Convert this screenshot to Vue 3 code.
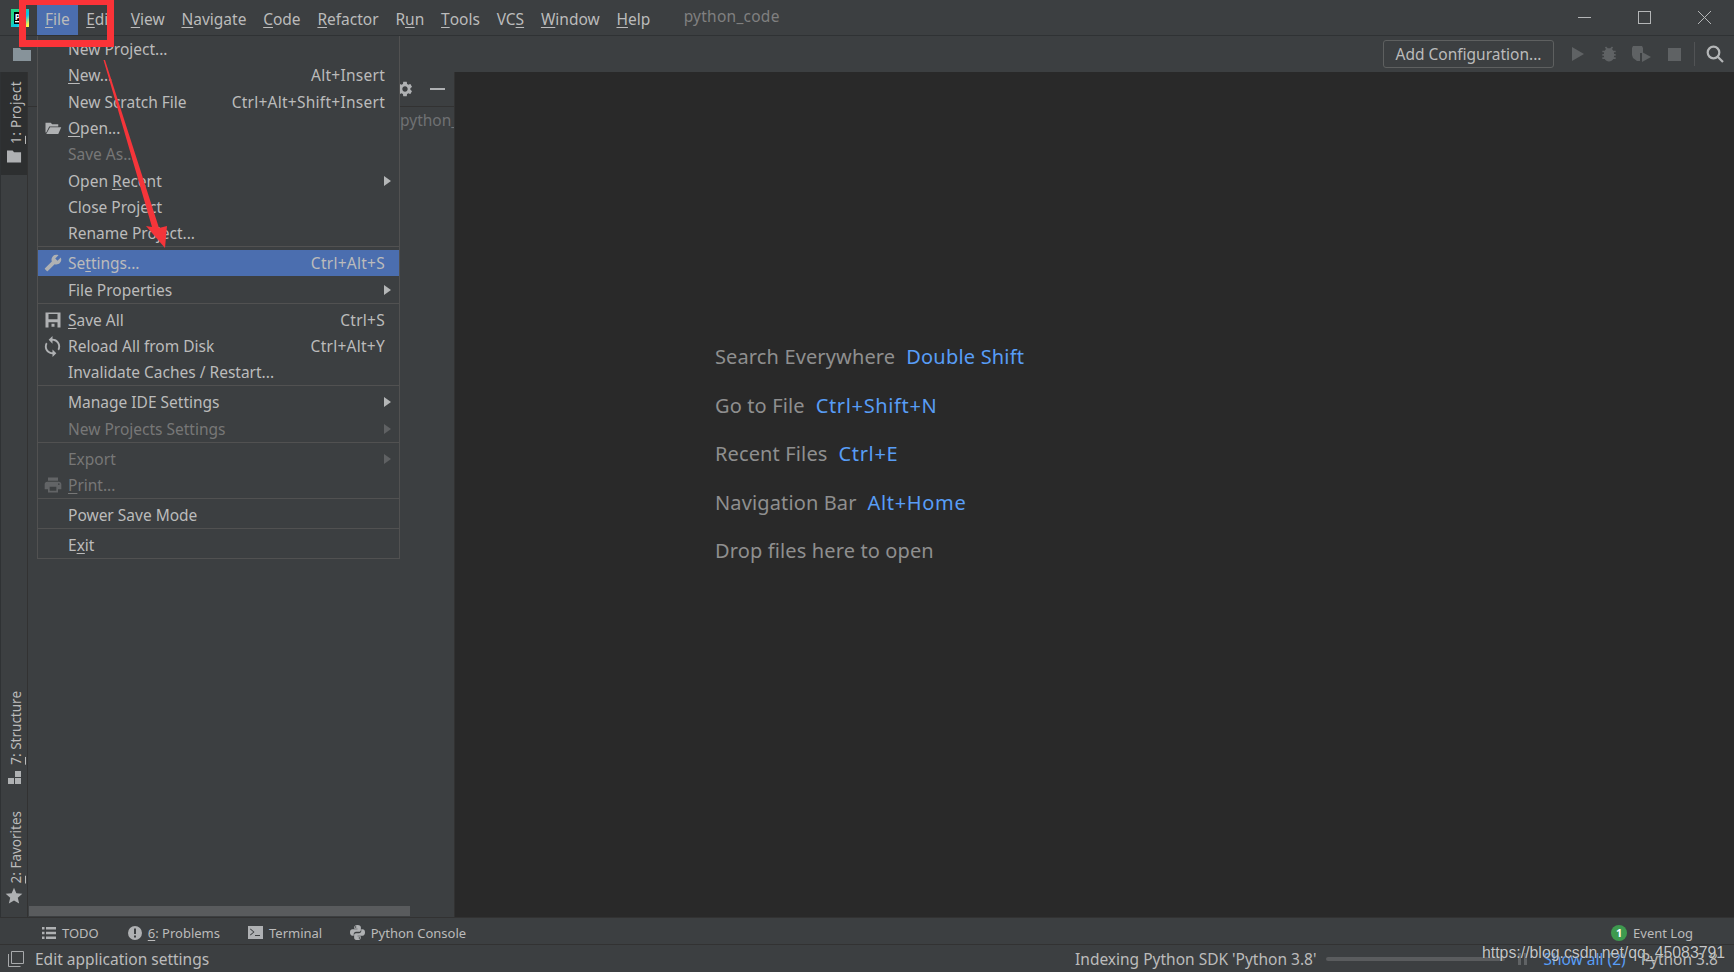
<script setup>
const menuBar = [
  { pre: '', key: 'F', post: 'ile', active: true },
  { pre: '', key: 'E', post: 'dit' },
  { pre: '', key: 'V', post: 'iew' },
  { pre: '', key: 'N', post: 'avigate' },
  { pre: '', key: 'C', post: 'ode' },
  { pre: '', key: 'R', post: 'efactor' },
  { pre: 'R', key: 'u', post: 'n' },
  { pre: '', key: 'T', post: 'ools' },
  { pre: 'VC', key: 'S', post: '' },
  { pre: '', key: 'W', post: 'indow' },
  { pre: '', key: 'H', post: 'elp' },
]

const fileMenu = [
  { pre: 'New Project...' },
  { pre: '', key: 'N', post: 'ew...', hint: 'Alt+Insert' },
  { pre: 'New Scratch File', hint: 'Ctrl+Alt+Shift+Insert' },
  { pre: '', key: 'O', post: 'pen...', icon: 'open' },
  { pre: 'Save As...', off: true },
  { pre: 'Open ', key: 'R', post: 'ecent', sub: true },
  { pre: 'Close Project' },
  { pre: 'Rename Project...' },
  { sep: true },
  { pre: 'Se', key: 't', post: 'tings...', hint: 'Ctrl+Alt+S', icon: 'wrench', selected: true },
  { pre: 'File Properties', sub: true },
  { sep: true },
  { pre: '', key: 'S', post: 'ave All', hint: 'Ctrl+S', icon: 'save' },
  { pre: 'Reload All from Disk', hint: 'Ctrl+Alt+Y', icon: 'reload' },
  { pre: 'Invalidate Caches / Restart...' },
  { sep: true },
  { pre: 'Manage IDE Settings', sub: true },
  { pre: 'New Projects Settings', sub: true, off: true },
  { sep: true },
  { pre: 'Export', sub: true, off: true },
  { pre: '', key: 'P', post: 'rint...', icon: 'print', off: true },
  { sep: true },
  { pre: 'Power Save Mode' },
  { sep: true },
  { pre: 'E', key: 'x', post: 'it' },
]

const tips = [
  { text: 'Search Everywhere', keys: 'Double Shift' },
  { text: 'Go to File', keys: 'Ctrl+Shift+N', plus: true },
  { text: 'Recent Files', keys: 'Ctrl+E', plus: true },
  { text: 'Navigation Bar', keys: 'Alt+Home', plus: true },
  { text: 'Drop files here to open' },
]

const iconPaths = {
  open: 'M2 5h7l2 2h8v3H7L3 18H2zM8 11h15l-4 9H3z',
  wrench: 'M1.3 19l9.1-9.1c-.9-2.3-.4-5 1.5-6.9 2-2 5-2.4 7.4-1.3L15 6l3 3 4.4-4.3c1.2 2.4.7 5.4-1.3 7.4-1.9 1.9-4.6 2.4-6.9 1.5l-9.1 9.1c-.4.4-1 .4-1.4 0l-2.3-2.3c-.5-.4-.5-1.1-.1-1.4z',
  save: 'M2 2h20v20H2zM6 4v7h12V4zM6 15v7h12v-7zM10 17h4v4h-4z',
  reload: 'M12 4V1L8 5l4 4V6c3.31 0 6 2.69 6 6 0 1.01-.25 1.97-.7 2.8l1.46 1.46C19.54 15.03 20 13.57 20 12c0-4.42-3.58-8-8-8zm0 14c-3.31 0-6-2.69-6-6 0-1.01.25-1.97.7-2.8L5.24 7.74C4.46 8.97 4 10.43 4 12c0 4.42 3.58 8 8 8v3l4-4-4-4v3z',
  print: 'M19 8H5c-1.66 0-3 1.34-3 3v6h4v4h12v-4h4v-6c0-1.66-1.34-3-3-3zm-3 11H8v-5h8v5zm3-7c-.55 0-1-.45-1-1s.45-1 1-1 1 .45 1 1-.45 1-1 1zm-1-9H6v4h12V3z',
}
</script>

<template>
  <div class="ide">
    <header class="titlebar">
      <svg class="logo" viewBox="0 0 18 18">
        <defs>
          <linearGradient id="pcg" x1="0" y1="0" x2="1" y2="1">
            <stop offset="0" stop-color="#21d789" />
            <stop offset="0.3" stop-color="#21d789" />
            <stop offset="0.62" stop-color="#07c3f2" />
            <stop offset="0.9" stop-color="#fcf84a" />
          </linearGradient>
        </defs>
        <rect width="18" height="18" fill="url(#pcg)" />
        <rect x="3" y="3" width="12" height="12" fill="#000" />
        <text x="3.800" y="10.500" class="logo-text">P</text>
        <rect x="4" y="12" width="6" height="1.400" fill="#fff" />
      </svg>
      <nav class="menubar">
        <span v-for="m in menuBar" :key="m.post + m.pre" class="menubar-item" :class="{ active: m.active }">{{ m.pre }}<u>{{ m.key }}</u>{{ m.post }}</span>
      </nav>
      <span class="project-name">python_code</span>
      <div class="win-buttons">
        <svg viewBox="0 0 13 13"><path d="M0 6.500h13" /></svg>
        <svg viewBox="0 0 13 13"><rect x="0.500" y="0.500" width="12" height="12" /></svg>
        <svg viewBox="0 0 13 13"><path d="M0 0l13 13M13 0L0 13" /></svg>
      </div>
    </header>

    <div class="toolbar">
      <svg class="tb-folder" viewBox="0 0 18 14"><path d="M0 1h7l1.500 2H18v11H0z" /></svg>
      <button class="add-config">Add Configuration...</button>
      <svg class="tb-icon run" viewBox="0 0 12 14"><path d="M0 0l12 7-12 7z" /></svg>
      <svg class="tb-icon debug" viewBox="0 0 24 24"><path d="M20 8h-2.810c-.45-.78-1.070-1.450-1.820-1.960L17 4.410 15.590 3l-2.170 2.170C12.960 5.060 12.490 5 12 5c-.49 0-.96.06-1.410.17L8.410 3 7 4.410l1.620 1.630C7.880 6.550 7.260 7.220 6.810 8H4v2h2.090c-.05.33-.09.66-.09 1v1H4v2h2v1c0 .34.04.67.09 1H4v2h2.810c1.040 1.790 2.970 3 5.190 3s4.150-1.210 5.190-3H20v-2h-2.090c.05-.33.09-.66.09-1v-1h2v-2h-2v-1c0-.34-.04-.67-.09-1H20V8z" /></svg>
      <svg class="tb-icon cover" viewBox="0 0 19 16"><path d="M1 0h9l1 2v5H8v8H5L1 12 0 9V2z" /><path d="M10 6l9 5-9 5z" /></svg>
      <span class="tb-stop"></span>
      <span class="tb-sep"></span>
      <svg class="tb-search" viewBox="0 0 18 18"><circle cx="7.500" cy="7.500" r="5.800" /><path d="M11.500 11.500l5.500 5.500" /></svg>
    </div>

    <div class="middle">
      <aside class="rail">
        <div class="rail-btn rail-active">
          <span class="rail-label rail-project"><u>1</u>: Project</span>
          <svg class="rail-icon" viewBox="0 0 16 13"><path d="M0 0h6l1.500 2H15v11H0z" /></svg>
        </div>
        <div class="rail-spacer"></div>
        <div class="rail-btn">
          <span class="rail-label"><u>7</u>: Structure</span>
          <svg class="rail-icon" viewBox="0 0 13 13"><path d="M7 0h6v6H7zM0 7h6v6H0zM7 7h6v6H7z" /></svg>
        </div>
        <div class="rail-btn rail-fav">
          <span class="rail-label"><u>2</u>: Favorites</span>
          <svg class="rail-star" viewBox="0 0 24 24"><path d="M12 17.270L18.180 21l-1.640-7.030L22 9.240l-7.190-.61L12 2 9.190 8.630 2 9.240l5.460 4.730L5.820 21z" /></svg>
        </div>
      </aside>

      <section class="panel">
        <div class="panel-head">
          <svg class="gear" viewBox="0 0 24 24"><path d="M19.140 12.940c.04-.3.06-.61.06-.94 0-.32-.02-.64-.07-.94l2.030-1.580c.18-.14.23-.41.12-.61l-1.920-3.320c-.12-.22-.37-.29-.59-.22l-2.390.96c-.5-.38-1.030-.7-1.620-.94l-.36-2.540c-.04-.24-.24-.41-.48-.41h-3.840c-.24 0-.43.17-.47.41l-.36 2.540c-.59.24-1.130.57-1.620.94l-2.390-.96c-.22-.08-.47 0-.59.22L2.740 8.870c-.12.21-.08.47.12.61l2.030 1.580c-.05.3-.09.63-.09.94s.02.64.07.94l-2.030 1.580c-.18.14-.23.41-.12.61l1.920 3.320c.12.22.37.29.59.22l2.390-.96c.5.38 1.030.7 1.620.94l.36 2.540c.05.24.24.41.48.41h3.840c.24 0 .44-.17.47-.41l.36-2.540c.59-.24 1.130-.56 1.620-.94l2.390.96c.22.08.47 0 .59-.22l1.920-3.320c.12-.22.07-.47-.12-.61l-2.010-1.580zM12 15.600c-1.980 0-3.600-1.620-3.600-3.600s1.620-3.600 3.600-3.600 3.600 1.620 3.600 3.600-1.620 3.600-3.600 3.600z" /></svg>
          <span class="minus"></span>
        </div>
        <div class="panel-body">
          <span class="tree-root">python_code</span>
          <div class="scrollbar"></div>
        </div>
      </section>

      <main class="editor">
        <p v-for="t in tips" :key="t.text" class="tip">
          <span>{{ t.text }}</span><span v-if="t.keys" class="tip-keys" :class="{ plus: t.plus }">{{ t.keys }}</span>
        </p>
      </main>
    </div>

    <div class="toolwindows">
      <span class="tw-item tw-todo">
        <svg viewBox="0 0 14 12"><path d="M0 0h2.500v2.500H0zM4 0h10v2.500H4zM0 4.700h2.500v2.500H0zM4 4.700h10v2.500H4zM0 9.400h2.500v2.500H0zM4 9.400h10v2.500H4z" /></svg>TODO
      </span>
      <span class="tw-item tw-problems">
        <svg viewBox="0 0 14 14"><path fill-rule="evenodd" d="M7 0a7 7 0 1 0 0 14A7 7 0 0 0 7 0zM6 2.500h2V8H6zM6 9.500h2v2H6z" /></svg><span><u>6</u>: Problems</span>
      </span>
      <span class="tw-item tw-terminal">
        <svg viewBox="0 0 15 13"><path fill-rule="evenodd" d="M0 0h15v13H0zM2.500 2.500L2 3.200 5.200 6 2 8.800l.5.7L6.500 6zM7 9v1h5V9z" /></svg>Terminal
      </span>
      <span class="tw-item tw-python">
        <svg viewBox="0 0 16 16"><path d="M8 0C5.500 0 4.500 1 4.500 2.500V4H8v.6H2.600C1 4.600 0 5.800 0 8s1 3.400 2.600 3.400H4V9.600C4 8.200 5 7.200 6.400 7.200h3.200c1.200 0 2-.8 2-2V2.500C11.600 1 10.500 0 8 0zM6 1.300a.8.8 0 1 1 0 1.600.8.8 0 0 1 0-1.600z" /><path d="M8 16c2.500 0 3.500-1 3.500-2.500V12H8v-.6h5.400C15 11.400 16 10.200 16 8s-1-3.400-2.600-3.400H12v1.800c0 1.400-1 2.400-2.400 2.400H6.400c-1.200 0-2 .8-2 2v2.700C4.400 15 5.500 16 8 16zm2-1.300a.8.8 0 1 1 0-1.600.8.8 0 0 1 0 1.600z" /></svg>Python Console
      </span>
      <span class="tw-item tw-log"><span class="log-badge">1</span>Event Log</span>
    </div>

    <footer class="statusbar">
      <svg class="st-toggle" viewBox="0 0 16 16"><path d="M3.500 0.500h12v12h-12zM0.500 3v12.500h12" /></svg>
      <span class="st-text">Edit application settings</span>
      <span class="st-index">Indexing Python SDK 'Python 3.8'</span>
      <span class="st-progress"></span>
      <span class="st-pause"></span>
      <span class="st-link">Show all (2)</span>
      <span class="st-sdk">Python 3.8</span>
    </footer>

    <div class="file-menu">
      <template v-for="(item, i) in fileMenu" :key="i">
        <div v-if="item.sep" class="m-sep"></div>
        <div v-else class="m-row" :class="{ off: item.off, selected: item.selected }">
          <span class="m-icon" :class="item.icon">
            <svg v-if="item.icon" viewBox="0 0 24 24"><path :d="iconPaths[item.icon]" fill-rule="evenodd" /></svg>
          </span>
          <span class="m-label">{{ item.pre }}<u v-if="item.key">{{ item.key }}</u>{{ item.post }}</span>
          <span v-if="item.hint" class="m-hint">{{ item.hint }}</span>
          <span v-if="item.sub" class="m-arrow"></span>
        </div>
      </template>
    </div>

    <svg class="annotation" viewBox="0 0 200 260">
      <rect x="22.500" y="1.500" width="88" height="42" fill="none" stroke="#fb3338" stroke-width="7" />
      <path d="M103.500 60L105 60L159 228L167 226L165 248L146 226L152 227z" fill="#f5353a" />
    </svg>

    <div class="watermark">https://blog.csdn.net/qq_45083791</div>
  </div>
</template>

<style scoped>
.ide {
  position: relative;
  width: 1734px;
  height: 972px;
  overflow: hidden;
  display: flex;
  flex-direction: column;
  background: #3c3f41;
  color: #bbbbbb;
  font-family: "Noto Sans", "Open Sans", sans-serif;
  font-size: 15.500px;
}

u {
  text-underline-offset: 2px;
  text-decoration-thickness: 1px;
}

/* title bar */
.titlebar {
  height: 35px;
  flex: none;
  display: flex;
  align-items: center;
  border-bottom: 1px solid #2f3234;
  padding-left: 11px;
  box-sizing: content-box;
}

.logo {
  width: 18px;
  height: 18px;
  margin-right: 8px;
}

.logo-text {
  font-size: 9px;
  font-weight: 700;
  fill: #fff;
}

.menubar {
  display: flex;
  height: 30px;
  align-self: flex-end;
}

.menubar-item {
  display: flex;
  align-items: center;
  padding: 0 8.400px 3px;
  white-space: pre;
}

.menubar-item.active {
  background: #4b6eaf;
  padding: 0 8px 3px;
}

.project-name {
  margin-left: 25px;
  padding-bottom: 3px;
  color: #808080;
  letter-spacing: 0.25px;
}

.win-buttons {
  margin-left: auto;
  display: flex;
  gap: 47px;
  padding-right: 23px;
}

.win-buttons svg {
  width: 13px;
  height: 13px;
  fill: none;
  stroke: #b4b6b7;
  stroke-width: 1;
}

/* toolbar */
.toolbar {
  height: 36px;
  flex: none;
  display: flex;
  align-items: center;
  padding-left: 13px;
}

.tb-folder {
  width: 18px;
  height: 14px;
  fill: #87939a;
  margin-right: auto;
}

.add-config {
  width: 171px;
  height: 28px;
  box-sizing: border-box;
  border: 1px solid #5e6060;
  border-radius: 3px;
  background: transparent;
  color: #bbbbbb;
  font: inherit;
  padding: 0;
}

.tb-icon {
  fill: #5f6264;
}

.run {
  width: 12px;
  height: 14px;
  margin-left: 18px;
}

.debug {
  width: 20px;
  height: 20px;
  margin-left: 15px;
}

.cover {
  width: 19px;
  height: 16px;
  margin-left: 13px;
}

.tb-stop {
  width: 13px;
  height: 13px;
  background: #5f6264;
  margin-left: 17px;
}

.tb-sep {
  width: 1px;
  height: 24px;
  background: #515355;
  margin-left: 13px;
}

.tb-search {
  width: 18px;
  height: 18px;
  fill: none;
  stroke: #b4b6b7;
  stroke-width: 2.200;
  margin: 0 10px 0 11px;
}

/* middle */
.middle {
  flex: 1;
  min-height: 0;
  display: flex;
}

.rail {
  flex: none;
  display: flex;
  flex-direction: column;
  border-right: 1px solid #323232;
  border-left: 1px solid #2f3234;
  box-sizing: border-box;
  width: 28px;
}

.rail-spacer {
  flex: 1;
}

.rail-btn {
  display: flex;
  flex-direction: column;
  align-items: center;
  gap: 6px;
  padding: 9px 0 7px;
  font-size: 13.500px;
}

.rail-active {
  background: #2d2f30;
  height: 103px;
  box-sizing: border-box;
}

.rail-project {
  letter-spacing: 0.4px;
}

.rail-fav {
  margin-top: 10.500px;
  padding-bottom: 11px;
  gap: 3px;
}

.rail-label {
  writing-mode: vertical-rl;
  transform: rotate(180deg) translateX(-2px);
  line-height: 16px;
}

.rail-icon {
  width: 15px;
  height: 13px;
  fill: #afb1b3;
}

.rail-star {
  width: 20px;
  height: 20px;
  fill: #afb1b3;
}

/* project panel */
.panel {
  width: 426px;
  flex: none;
  display: flex;
  flex-direction: column;
  position: relative;
}

.panel-head {
  height: 34px;
  flex: none;
  display: flex;
  align-items: center;
  justify-content: flex-end;
  gap: 16px;
  padding-right: 9px;
  border-bottom: 1px solid #323232;
}

.gear {
  width: 18px;
  height: 18px;
  fill: #afb1b3;
}

.minus {
  width: 15px;
  height: 2px;
  background: #afb1b3;
}

.panel-body {
  flex: 1;
  overflow: hidden;
  display: flex;
  flex-direction: column;
  padding: 1px 0 1px 1px;
  box-sizing: border-box;
}

.tree-root {
  color: #6f7173;
  padding-left: 371px;
  white-space: nowrap;
  line-height: 24px;
}

.scrollbar {
  margin-top: auto;
  width: 381px;
  height: 10px;
  background: #595b5d;
}

/* editor */
.editor {
  flex: 1;
  background: #292929;
  padding: 269px 0 0 260px;
  border-left: 1px solid #323232;
  font-size: 20px;
  color: #8f8f8f;
}

.tip {
  margin: 0;
  height: 48.500px;
  line-height: 32px;
  white-space: nowrap;
  letter-spacing: 0.13px;
}

.tip-keys {
  color: #589df6;
  margin-left: 11px;
  letter-spacing: 0.2px;
}

.tip-keys.plus {
  letter-spacing: 0.65px;
}

/* bottom bars */
.toolwindows {
  height: 28px;
  flex: none;
  box-sizing: border-box;
  padding-top: 3px;
  display: flex;
  align-items: center;
  font-size: 13px;
  border-top: 1px solid #323232;
  border-bottom: 1px solid #323232;
}

.tw-item {
  display: flex;
  align-items: center;
  gap: 6px;
  white-space: nowrap;
}

.tw-item svg {
  fill: #afb1b3;
}

.tw-todo {
  margin-left: 42px;
}

.tw-todo svg {
  width: 14px;
  height: 12px;
}

.tw-problems {
  margin-left: 29px;
}

.tw-problems svg {
  width: 14px;
  height: 14px;
}

.tw-terminal {
  margin-left: 28px;
}

.tw-terminal svg {
  width: 15px;
  height: 13px;
}

.tw-python {
  margin-left: 27.500px;
}

.tw-python svg {
  width: 15px;
  height: 15px;
}

.tw-log {
  margin-left: auto;
  padding-right: 41px;
}

.log-badge {
  width: 16px;
  height: 16px;
  border-radius: 50%;
  background: #3e9a4f;
  color: #fff;
  font-size: 11px;
  font-weight: 700;
  display: flex;
  align-items: center;
  justify-content: center;
}

.statusbar {
  height: 27px;
  flex: none;
  display: flex;
  align-items: center;
  padding-left: 8px;
  white-space: nowrap;
}

.st-toggle {
  width: 16px;
  height: 16px;
  fill: none;
  stroke: #a7a9ab;
}

.st-text {
  margin-left: 11px;
}

.st-index {
  margin-left: auto;
}

.st-progress {
  width: 179px;
  height: 4px;
  border-radius: 2px;
  background: #5a5c5e;
  margin-left: 10px;
}

.st-pause {
  width: 9px;
  height: 12px;
  margin-left: 13px;
  border-left: 3px solid #606365;
  border-right: 3px solid #606365;
  box-sizing: border-box;
}

.st-link {
  color: #589df6;
  margin-left: 16px;
}

.st-sdk {
  margin-left: 15px;
  margin-right: 16px;
}

/* file menu */
.file-menu {
  position: absolute;
  left: 37px;
  top: 36px;
  width: 363px;
  box-sizing: border-box;
  background: #3c3f41;
  border: 1px solid #515151;
  border-top: 0;
  z-index: 2;
}

.m-row {
  height: 26.300px;
  display: flex;
  align-items: center;
  padding-right: 14px;
  white-space: pre;
}

.m-row.selected {
  background: #4b6eaf;
}

.m-row.off {
  color: #777777;
}

.m-icon {
  width: 30px;
  flex: none;
  display: flex;
  justify-content: center;
  padding-right: 1px;
  box-sizing: border-box;
}

.m-icon svg {
  width: 18px;
  height: 18px;
  fill: #afb1b3;
  flex: none;
}

.m-icon.reload svg {
  width: 23px;
  height: 23px;
}

.m-icon.print svg {
  width: 20px;
  height: 20px;
}

.off .m-icon svg {
  fill: #626466;
}

.m-hint {
  margin-left: auto;
  letter-spacing: 0.26px;
}

.m-arrow {
  margin-left: auto;
  margin-right: -6px;
  border-left: 7px solid #b4b6b7;
  border-top: 5px solid transparent;
  border-bottom: 5px solid transparent;
}

.off .m-arrow {
  border-left-color: #5f6163;
}

.m-sep {
  height: 3.800px;
  box-sizing: border-box;
  border-top: 1px solid #515151;
}

/* annotation over the screenshot */
.annotation {
  position: absolute;
  left: 0;
  top: 0;
  width: 200px;
  height: 260px;
  z-index: 3;
}

.watermark {
  position: absolute;
  left: 1482px;
  top: 944px;
  z-index: 3;
  color: #c4c6c8;
  font-family: "Liberation Sans", Arial, sans-serif;
  font-size: 15.850px;
  line-height: 18px;
  text-shadow: 0 0 1px #222;
}
</style>

<style>
html,
body {
  margin: 0;
  background: #3c3f41;
}
</style>
